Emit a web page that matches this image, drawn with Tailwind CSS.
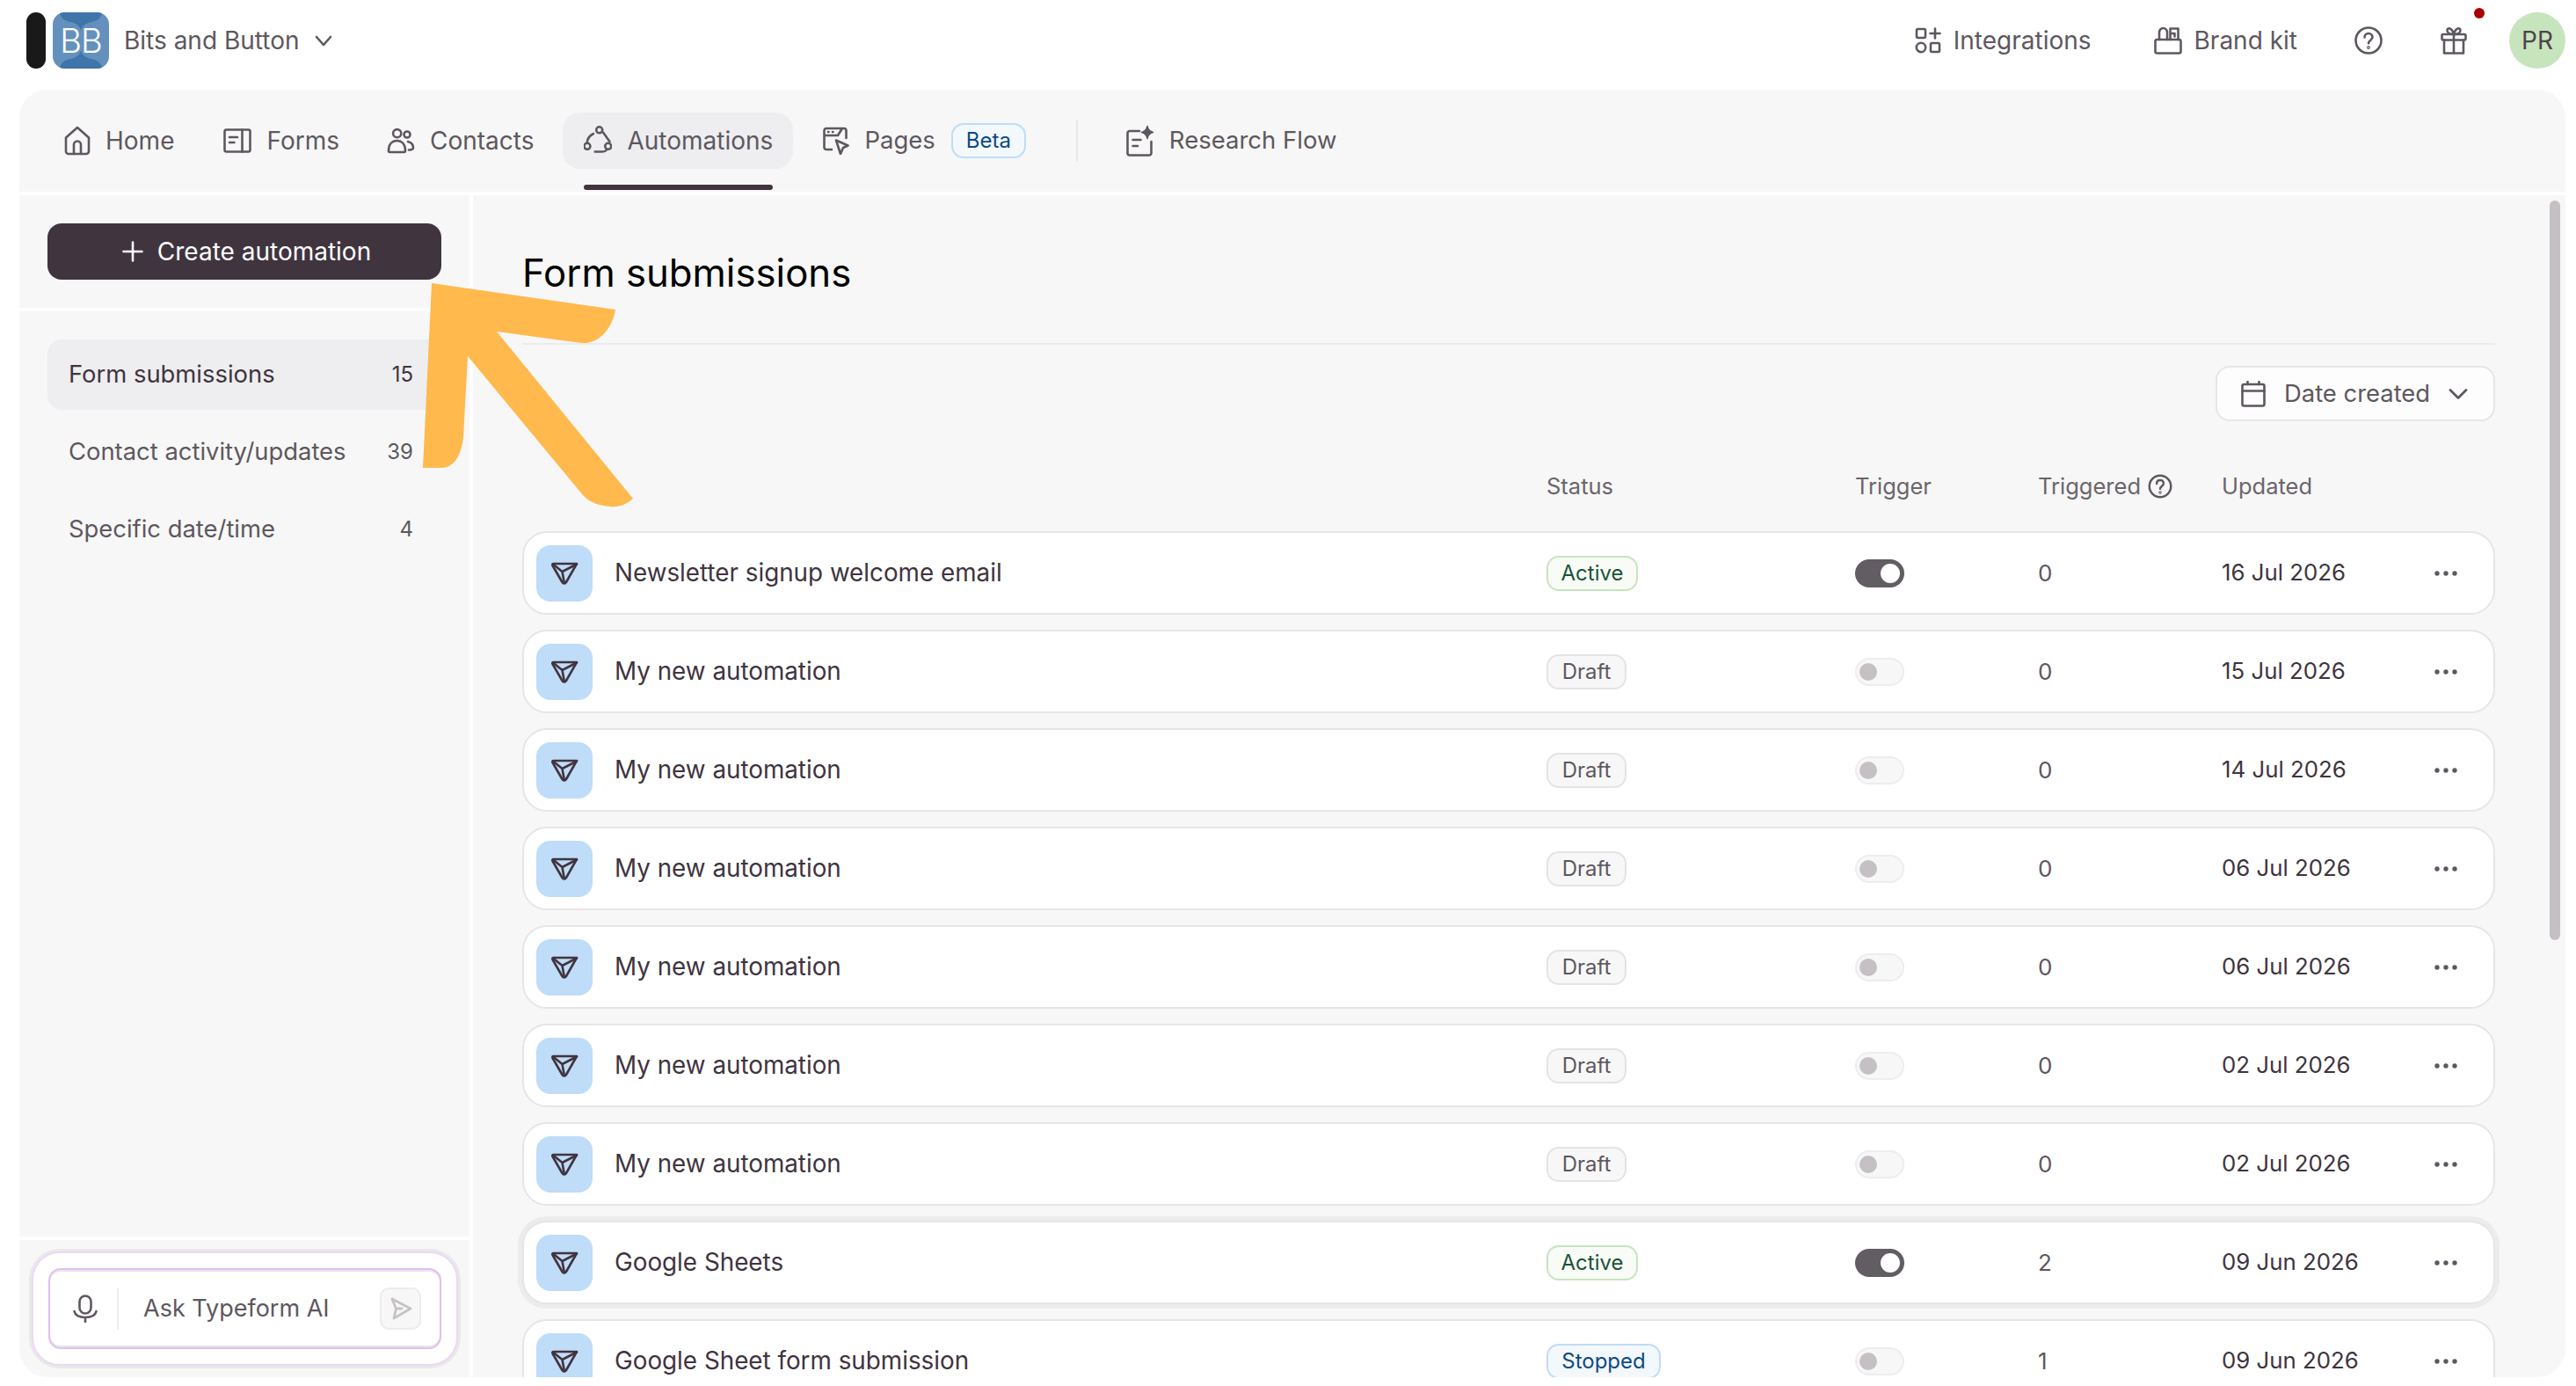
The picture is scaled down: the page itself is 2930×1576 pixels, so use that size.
<!DOCTYPE html>
<html lang="en">
<head>
    <meta charset="UTF-8">
    <meta name="viewport" content="width=device-width, initial-scale=1.0">
    <title>Automations</title>
    <script src="https://cdn.jsdelivr.net/npm/@tailwindcss/browser@4"></script>
</head>
<body class="bg-white h-[1576px] w-[2930px] overflow-hidden font-['Inter',sans-serif] text-[28px] text-[#5e5760]">

    <!-- Top bar -->
    <header class="h-[102px] flex items-start pt-[14px] pl-[30px] pr-[12px]">
        <div class="w-[22px] h-[64px] rounded-full bg-[#191919]"></div>
        <div class="relative ml-[8px] w-[64px] h-[64px] rounded-[14px] bg-[#6490bd] overflow-hidden flex items-center justify-center">
            <svg class="absolute inset-0" width="64" height="64" viewBox="0 0 64 64"><path d="M8 0h48c0 6-6 10-12 11-6 1-10 4-12 9-2-5-6-8-12-9C14 10 8 6 8 0ZM8 64h48c0-6-6-10-12-11-6-1-10-4-12-9-2 5-6 8-12 9-6 1-12 5-12 11Z" fill="#3f75a8"/></svg>
            <span class="relative text-white text-[38px] font-light leading-none tracking-[-1px]">BB</span>
        </div>
        <div class="ml-[17px] h-[64px] flex items-center gap-[16px]">
            <span>Bits and Button</span>
            <svg width="22" height="22" viewBox="0 0 22 22" fill="none" stroke="#5e5760" stroke-width="2.6" stroke-linecap="round" stroke-linejoin="round"><path d="M3 7l8 9 8-9"/></svg>
        </div>
        <div class="ml-auto h-[64px] flex items-center">
            <svg width="30" height="30" viewBox="0 0 30 30" fill="none" stroke="#5e5760" stroke-width="2.6" stroke-linecap="round" stroke-linejoin="round"><rect x="2" y="2" width="10" height="10" rx="1.5"/><path d="M23 1.5v11M17.5 7h11"/><circle cx="7" cy="23" r="5.2"/><rect x="18" y="18" width="10" height="10" rx="1.5"/></svg>
            <span class="ml-[14px]">Integrations</span>
            <svg class="ml-[71px]" width="32" height="32" viewBox="0 0 32 32" fill="none" stroke="#5e5760" stroke-width="2.6" stroke-linecap="round" stroke-linejoin="round"><rect x="1.5" y="15" width="29" height="15.5" rx="2"/><path d="M6 15V7c0-3 2-5 4.500-5S15 4 15 7v8M18.500 15V2.500h9V15M18.500 8h5v3.500"/></svg>
            <span class="ml-[14px]">Brand kit</span>
            <svg class="ml-[65px]" width="32" height="32" viewBox="0 0 32 32" fill="none" stroke="#5e5760" stroke-width="2.6" stroke-linecap="round" stroke-linejoin="round"><circle cx="16" cy="16" r="14.500"/><path d="M11.500 12.500c0-2.800 2-4.500 4.500-4.500s4.500 1.700 4.500 4.200c0 3.300-4.500 3.600-4.500 7"/><circle cx="16" cy="24" r=".6"/></svg>
            <div class="relative ml-[66px] w-[30px] h-[32px]">
                <svg width="30" height="32" viewBox="0 0 30 32" fill="none" stroke="#5e5760" stroke-width="2.6" stroke-linecap="round" stroke-linejoin="round"><rect x="1.500" y="9" width="27" height="6.500" rx="1.500"/><path d="M4 15.500V30.500H26V15.500M15 9V30.500M15 9C11 9 7.500 7.500 7.500 4.500 7.500 1 13 1 15 9ZM15 9C19 9 22.500 7.500 22.500 4.500 22.500 1 17 1 15 9Z"/></svg>
                <div class="absolute top-[-21px] left-[38px] w-[12px] h-[12px] rounded-full bg-[#a80000]"></div>
            </div>
            <div class="ml-[48px] w-[64px] h-[64px] rounded-full bg-[#c7e5bd] flex items-center justify-center text-[#4c444e]">PR</div>
        </div>
    </header>

    <!-- App panel -->
    <div class="ml-[22px] w-[2896px] h-[1464px] rounded-[32px] overflow-hidden relative flex flex-col gap-[4px]">
        <nav class="h-[116px] bg-[#f7f7f7] relative flex items-center shrink-0">
            <div class="ml-[51px] flex items-center gap-[17px]">
                <svg width="30" height="34" viewBox="0 0 30 34" fill="none" stroke="#5e5760" stroke-width="2.600" stroke-linecap="round" stroke-linejoin="round"><path d="M2 13.500 15 2l13 11.500V29a3 3 0 0 1-3 3H5a3 3 0 0 1-3-3V13.500Z"/><path d="M11 32V21.500a4 4 0 0 1 8 0V32"/></svg>
                <span>Home</span>
            </div>
            <div class="ml-[56px] flex items-center gap-[17px]">
                <svg width="32" height="28" viewBox="0 0 32 28" fill="none" stroke="#5e5760" stroke-width="2.600" stroke-linecap="round" stroke-linejoin="round"><rect x="1.500" y="1.500" width="29" height="25" rx="2"/><path d="M21.500 1.500v25M7 10h9M7 16h5.500"/></svg>
                <span>Forms</span>
            </div>
            <div class="ml-[54px] flex items-center gap-[17px]">
                <svg width="32" height="30" viewBox="0 0 32 30" fill="none" stroke="#5e5760" stroke-width="2.600" stroke-linecap="round" stroke-linejoin="round"><circle cx="11.700" cy="6.700" r="4.600"/><circle cx="23" cy="8" r="3.500"/><path d="M2 26.500C2 19 6 15 11.500 15S21 19 21 26.500c0 1-.6 1.500-1.500 1.500h-16C2.600 28 2 27.500 2 26.500ZM24 16c4 1 6 4 6 7 0 2-2 2.500-5 2.500"/></svg>
                <span>Contacts</span>
            </div>
            <div class="ml-[33px] w-[262px] h-[64px] rounded-[20px] bg-[#eeeef0] flex items-center pl-[24px] gap-[17px]">
                <svg width="32" height="34" viewBox="0 0 32 34" fill="none" stroke="#5e5760" stroke-width="2.600" stroke-linecap="round" stroke-linejoin="round"><circle cx="17.700" cy="4.800" r="3.500"/><circle cx="3.900" cy="23.300" r="3.500"/><circle cx="27.700" cy="23.300" r="3.500"/><path d="M3.700 19.500C4 15 7 11 11 9M22 7.500 29.500 18M12.700 29.500H20c3 0 5.500-.8 6-2.500"/></svg>
                <span>Automations</span>
            </div>
            <div class="ml-[34px] flex items-center text-[27.5px]">
                <svg width="30" height="32" viewBox="0 0 30 32" fill="none" stroke="#5e5760" stroke-width="2.600" stroke-linecap="round" stroke-linejoin="round"><path d="M10 26H4a2.500 2.500 0 0 1-2.500-2.500v-19A2.500 2.500 0 0 1 4 2h20a2.500 2.500 0 0 1 2.500 2.500V13M1.500 10H17l5-8M6 6h.5M11 6h.5"/><path d="M15 15.500l13.500 6-5.500 2.500-3 7-5-15.500Z"/></svg>
                <span class="ml-[17px]">Pages</span>
                <span class="ml-[18px] w-[85px] h-[40px] rounded-[14px] bg-[#f3f8fd] border-2 border-[#bfdcf8] text-[#0d4a85] text-[24px] flex items-center justify-center">Beta</span>
            </div>
            <div class="ml-[57px] w-[2px] h-[48px] bg-[#eaeaea]"></div>
            <div class="ml-[55px] flex items-center gap-[17px] text-[27.5px]">
                <svg width="32" height="36" viewBox="0 0 32 36" fill="none" stroke="#5e5760" stroke-width="2.600" stroke-linecap="round" stroke-linejoin="round"><path d="M15 7H4a2.500 2.500 0 0 0-2.500 2.500V32A2.500 2.500 0 0 0 4 34.500h22a2.500 2.500 0 0 0 2.500-2.500V19M7.500 17h9M7.500 24h5.500"/><path d="M24 1.500c.8 4 2.500 6 6.500 7-4 1-5.700 3-6.500 7-.8-4-2.500-6-6.500-7 4-1 5.700-3 6.500-7Z" fill="#5e5760" stroke-width="1.500"/></svg>
                <span>Research Flow</span>
            </div>
            <div class="absolute left-[642px] top-[108px] w-[215px] h-[6px] rounded-full bg-[#40343f]"></div>
        </nav>

        <div class="flex-1 flex gap-[4px] min-h-0">
            <!-- Sidebar -->
            <aside class="w-[512px] flex flex-col gap-[4px] shrink-0 text-[27.4px]">
                <div class="h-[128px] bg-[#f7f7f7] pt-[32px] px-[32px]">
                    <button class="w-[448px] h-[64px] pl-[5px] rounded-[16px] bg-[#40343f] text-white text-[28px] flex items-center justify-center gap-[16px]">
                        <svg width="24" height="24" viewBox="0 0 24 24" fill="none" stroke="#fff" stroke-width="2.600" stroke-linecap="round"><path d="M12 1.500v21M1.500 12h21"/></svg>
                        <span>Create automation</span>
                    </button>
                </div>
                <div class="flex-1 bg-[#f7f7f7] pt-[32px] px-[32px]">
                    <div class="h-[80px] rounded-[16px] bg-[#eeeef0] flex items-center justify-between pl-[24px] pr-[32px] text-[#40343f]"><span>Form submissions</span><span class="text-[24px]">15</span></div>
                    <div class="mt-[8px] h-[80px] flex items-center justify-between pl-[24px] pr-[32px]"><span>Contact activity/updates</span><span class="text-[24px]">39</span></div>
                    <div class="mt-[8px] h-[80px] flex items-center justify-between pl-[24px] pr-[32px]"><span>Specific date/time</span><span class="text-[24px]">4</span></div>
                </div>
                <div class="h-[156px] bg-[#f7f7f7] pt-[13px] pl-[14px]">
                    <div class="w-[485px] h-[130px] rounded-[32px] bg-white border-[2px] border-[#ecd8f5] shadow-[0_0_0_3px_#e9e9e9] flex items-center justify-center">
                        <div class="w-[447px] h-[92px] rounded-[14px] border-2 border-[#e0bff0] shadow-[inset_0_2px_0_#e6e6e6,inset_0_-2px_0_#e6e6e6] flex items-center">
                            <svg class="ml-[26px]" width="28" height="32" viewBox="0 0 28 32" fill="none" stroke="#5e5760" stroke-width="2.600" stroke-linecap="round" stroke-linejoin="round"><rect x="7.500" y="1.500" width="13" height="20" rx="6.500"/><path d="M1.500 19c1 4.500 6 7 12.500 7s11.500-2.500 12.500-7M14 26v5"/></svg>
                            <div class="ml-[22px] w-[2px] h-[48px] bg-[#eeeeee]"></div>
                            <span class="ml-[28px] text-[27px]">Ask Typeform AI</span>
                            <div class="ml-auto mr-[21px] w-[47px] h-[48px] rounded-[10px] bg-[#f7f7f7] border-2 border-[#ececec] flex items-center justify-center">
                                <svg width="26" height="28" viewBox="0 0 26 28" fill="none" stroke="#c6c2c6" stroke-width="2.800" stroke-linecap="round" stroke-linejoin="round"><path d="M3 3 24 14 5 25l2.500-11L3 3ZM7.500 14H14"/></svg>
                            </div>
                        </div>
                    </div>
                </div>
            </aside>

            <!-- Main -->
            <main class="flex-1 min-w-0 bg-[#f7f7f7] relative overflow-hidden pl-[56px] pr-[80px]">
                <div class="h-[170px] pt-[62px] border-b-2 border-[#ebebeb]">
                    <h1 class="text-[43.7px] leading-[54px] text-black">Form submissions</h1>
                </div>
                <div class="mt-[24px] flex justify-end">
                    <button class="w-[318px] h-[63px] rounded-[16px] bg-[#fdfdfd] border-2 border-[#e6e6e6] flex items-center pl-[27px] pr-[29px] text-[27.4px]">
                        <svg width="28" height="30" viewBox="0 0 28 30" fill="none" stroke="#5e5760" stroke-width="2.600" stroke-linecap="round" stroke-linejoin="round"><rect x="1.500" y="4" width="25" height="24.500" rx="2"/><path d="M1.500 11.500h25M7.500 1v3M20.500 1v3"/></svg>
                        <span class="ml-[21px]">Date created</span>
                        <svg class="ml-auto" width="22" height="14" viewBox="0 0 22 14" fill="none" stroke="#5e5760" stroke-width="2.800" stroke-linecap="round" stroke-linejoin="round"><path d="M2 2.500l9 9 9-9"/></svg>
                    </button>
                </div>
                <div class="mt-[56px] h-[36px] flex items-center text-[25.5px] pl-[1165px] text-[#6b656c]">
                    <div class="w-[351px]">Status</div>
                    <div class="w-[208px]">Trigger</div>
                    <div class="w-[209px] flex items-center gap-[8px]">
                        <span>Triggered</span>
                        <svg width="28" height="28" viewBox="0 0 32 32" fill="none" stroke="#5e5760" stroke-width="2.800" stroke-linecap="round" stroke-linejoin="round"><circle cx="16" cy="16" r="14"/><path d="M11.500 12.500c0-2.800 2-4.500 4.500-4.500s4.500 1.700 4.500 4.200c0 3.300-4.500 3.600-4.500 7"/><circle cx="16" cy="24" r=".6"/></svg>
                    </div>
                    <div>Updated</div>
                </div>
                <div id="rows" class="mt-[33px] flex flex-col gap-[17px]"></div>
                <div class="absolute right-[6px] top-[6px] w-[12px] h-[841px] rounded-full bg-[#c4c0c4]"></div>
            </main>
        </div>

        <!-- Annotation arrow -->
        <svg class="absolute left-0 top-0 pointer-events-none" width="800" height="600" viewBox="22 102 800 600"><path d="M491 322 700 352C697 372 682 392 661 390L565 377 720 567C712 574 703 577 694 576 682 575 671 572 663 563L532 405 527 497C525 515 518 532 502 532L481 532Z" fill="#ffb94d"/></svg>
    </div>

<script>
    const rows = [
        ['Newsletter signup welcome email', 'Active', true, 0, '16 Jul 2026'],
        ['My new automation', 'Draft', false, 0, '15 Jul 2026'],
        ['My new automation', 'Draft', false, 0, '14 Jul 2026'],
        ['My new automation', 'Draft', false, 0, '06 Jul 2026'],
        ['My new automation', 'Draft', false, 0, '06 Jul 2026'],
        ['My new automation', 'Draft', false, 0, '02 Jul 2026'],
        ['My new automation', 'Draft', false, 0, '02 Jul 2026'],
        ['Google Sheets', 'Active', true, 2, '09 Jun 2026'],
        ['Google Sheet form submission', 'Stopped', false, 1, '09 Jun 2026']
    ];

    const badges = {
        Active: 'w-[104px] bg-[#f8fbf6] border-[#c7e5bd] text-[#1a5438]',
        Draft: 'w-[91px] bg-[#f7f7f7] border-[#e4e4e4] text-[#5e5760]',
        Stopped: 'w-[130px] bg-[#f3f8fd] border-[#bfdcf8] text-[#0d4a85]'
    };

    const on = '<div class="w-[56px] h-[32px] rounded-full bg-[#625c63] relative"><div class="absolute right-[5px] top-[5px] w-[22px] h-[22px] rounded-full bg-white"></div></div>';
    const off = '<div class="w-[56px] h-[32px] rounded-full bg-[#f7f7f7] border-2 border-[#ededed] relative"><div class="absolute left-[3px] top-[4px] w-[20px] h-[20px] rounded-full bg-[#c4c0c4]"></div></div>';

    document.getElementById('rows').innerHTML = rows.map((r, i) => `
        <div class="h-[95px] shrink-0 rounded-[28px] bg-white border-2 border-[#e6e6e6] flex items-center pl-[14px] ${i === 7 ? 'shadow-[0_0_0_5px_#ececec]' : ''}">
            <div class="w-[64px] h-[64px] rounded-[16px] bg-[#bfdcf8] flex items-center justify-center shrink-0">
                <svg width="32" height="28" viewBox="0 0 32 28" fill="none" stroke="#40343f" stroke-width="2.600" stroke-linecap="round" stroke-linejoin="round"><path d="M3.500 3H30L18 24c-1 2-3.500 2-4.500 0L2.500 5c-.5-1 0-2 1-2Z"/><path d="M3 3.500 13.500 12 30 3.500M13.500 12l2.200 12"/></svg>
            </div>
            <div class="ml-[25px] w-[1060px] text-[#40343f] text-[27.8px]">${r[0]}</div>
            <div class="w-[351px]"><span class="${badges[r[1]]} h-[40px] rounded-[14px] border-2 text-[24px] flex items-center justify-center">${r[1]}</span></div>
            <div class="w-[208px]">${r[2] ? on : off}</div>
            <div class="w-[209px] text-[26px]">${r[3]}</div>
            <div class="w-[241px] text-[#40343f] text-[25.8px]">${r[4]}</div>
            <svg width="28" height="6" viewBox="0 0 28 6" fill="#5e5760"><circle cx="4" cy="3" r="2.700"/><circle cx="14" cy="3" r="2.700"/><circle cx="24" cy="3" r="2.700"/></svg>
        </div>`).join('');
</script>
</body>
</html>
